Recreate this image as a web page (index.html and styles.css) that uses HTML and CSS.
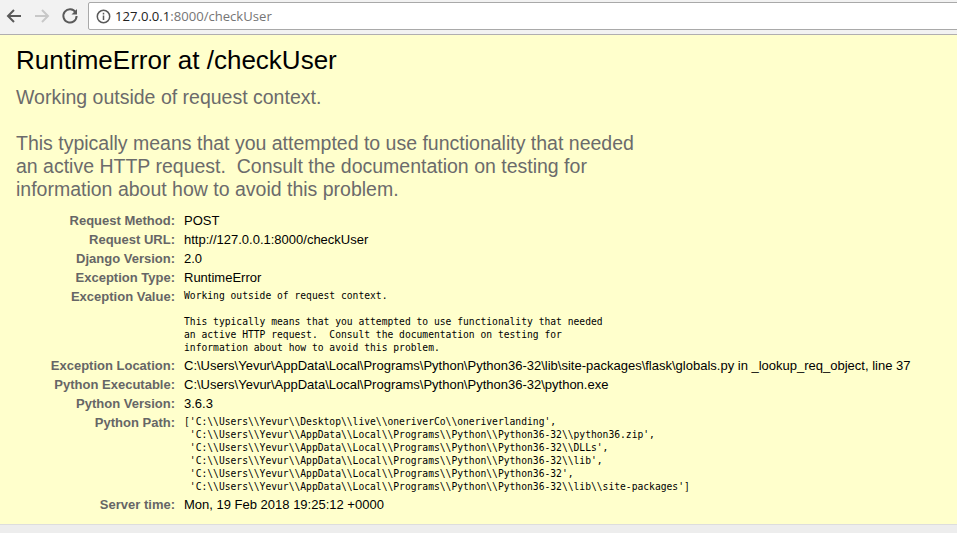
FILE: index.html
```html
<!DOCTYPE html>
<html lang="en">
<head>
<meta charset="utf-8">
<title>RuntimeError at /checkUser</title>
<link rel="stylesheet" href="styles.css">
</head>
<body>
<header class="toolbar">
  <svg class="nav" width="18" height="18" viewBox="0 0 18 18" fill="none" stroke="#5a5a5a" stroke-width="2"><path d="M16 9H3M9 3L3 9l6 6"/></svg>
  <svg class="nav" width="18" height="18" viewBox="0 0 18 18" fill="none" stroke="#c8c8c8" stroke-width="2"><path d="M2 9h13M9 3l6 6-6 6"/></svg>
  <svg class="nav" width="18" height="18" viewBox="0 0 18 18" fill="none" stroke="#5a5a5a" stroke-width="2"><path d="M14.6 5.4A6.6 6.6 0 1 0 15.6 9"/><path d="M16 2v5.5h-5.5z" fill="#5a5a5a" stroke="none"/></svg>
  <div class="omnibox">
    <svg width="15" height="15" viewBox="0 0 15 15" fill="none"><circle cx="7.5" cy="7.5" r="6.2" stroke="#5a5a5a" stroke-width="1.5"/><path d="M7.5 6.5v4.5M7.5 3.8v1.6" stroke="#5a5a5a" stroke-width="1.5"/></svg>
    <span class="url"><span class="host">127.0.0.1</span>:8000/checkUser</span>
  </div>
</header>
<main class="summary">
  <h1>RuntimeError at /checkUser</h1>
  <pre class="exception-value">Working outside of request context.

This typically means that you attempted to use functionality that needed
an active HTTP request.  Consult the documentation on testing for
information about how to avoid this problem.</pre>
  <table class="meta">
    <tbody>
      <tr><th>Request Method:</th><td>POST</td></tr>
      <tr><th>Request URL:</th><td>http://127.0.0.1:8000/checkUser</td></tr>
      <tr><th>Django Version:</th><td>2.0</td></tr>
      <tr><th>Exception Type:</th><td>RuntimeError</td></tr>
      <tr><th>Exception Value:</th><td><pre>Working outside of request context.

This typically means that you attempted to use functionality that needed
an active HTTP request.  Consult the documentation on testing for
information about how to avoid this problem.</pre></td></tr>
      <tr><th>Exception Location:</th><td>C:\Users\Yevur\AppData\Local\Programs\Python\Python36-32\lib\site-packages\flask\globals.py in _lookup_req_object, line 37</td></tr>
      <tr><th>Python Executable:</th><td>C:\Users\Yevur\AppData\Local\Programs\Python\Python36-32\python.exe</td></tr>
      <tr><th>Python Version:</th><td>3.6.3</td></tr>
      <tr><th>Python Path:</th><td><pre>['C:\\Users\\Yevur\\Desktop\\live\\oneriverCo\\oneriverlanding',
 'C:\\Users\\Yevur\\AppData\\Local\\Programs\\Python\\Python36-32\\python36.zip',
 'C:\\Users\\Yevur\\AppData\\Local\\Programs\\Python\\Python36-32\\DLLs',
 'C:\\Users\\Yevur\\AppData\\Local\\Programs\\Python\\Python36-32\\lib',
 'C:\\Users\\Yevur\\AppData\\Local\\Programs\\Python\\Python36-32',
 'C:\\Users\\Yevur\\AppData\\Local\\Programs\\Python\\Python36-32\\lib\\site-packages']</pre></td></tr>
      <tr><th>Server time:</th><td>Mon, 19 Feb 2018 19:25:12 +0000</td></tr>
    </tbody>
  </table>
</main>
</body>
</html>
```

FILE: styles.css
```css
* { box-sizing: border-box; }
html, body { margin: 0; height: 100%; }
body {
  display: flex;
  flex-direction: column;
  height: 533px;
  overflow: hidden;
  background: #ededed;
  font-family: "Liberation Sans", Arial, sans-serif;
  color: #000;
}
.toolbar {
  flex: none;
  height: 35px;
  display: flex;
  align-items: center;
  gap: 10px;
  padding: 2px 0 4px 5px;
  background: #f2f2f2;
  border-bottom: 1px solid #b0aeb0;
}
.nav { flex: none; }
.omnibox {
  flex: 1;
  height: 28px;
  margin-left: -1px;
  margin-right: -3px;
  display: flex;
  align-items: center;
  gap: 4px;
  padding-left: 7px;
  background: #fff;
  border: 1px solid #a9a9a9;
  border-radius: 2px;
}
.url {
  font-family: "Open Sans", sans-serif;
  font-size: 13.1px;
  color: #757575;
}
.host { color: #222; }
.summary {
  flex: none;
  height: 490px;
  padding: 10px 16px;
  background: #ffc;
  border-bottom: 1px solid #ddd;
}
h1 {
  margin: 0;
  font-size: 26px;
  font-weight: normal;
  line-height: 30px;
}
.exception-value {
  margin: 11px 0 10px;
  font-family: "Liberation Sans", Arial, sans-serif;
  font-size: 19.5px;
  line-height: 23px;
  color: #6b6b6b;
  white-space: pre-wrap;
}
.meta {
  border-collapse: collapse;
  margin-top: 9px;
  font-size: 13px;
}
.meta th {
  width: 168px;
  padding: 0 9px 0 0;
  text-align: right;
  vertical-align: top;
  color: #666;
  font-weight: bold;
  line-height: 19px;
  white-space: nowrap;
}
.meta td {
  padding: 0;
  vertical-align: top;
  line-height: 19px;
  white-space: nowrap;
}
.meta pre {
  margin: 0;
  padding: 2px 0;
  font-family: "DejaVu Sans Mono", monospace;
  font-size: 9.67px;
  line-height: 13px;
}
```
